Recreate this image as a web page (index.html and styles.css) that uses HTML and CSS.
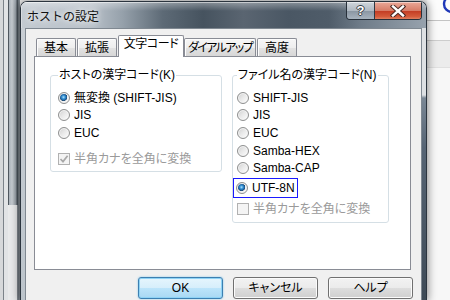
FILE: index.html
```html
<!DOCTYPE html>
<html lang="ja">
<head>
<meta charset="utf-8">
<title>ホストの設定</title>
<link rel="stylesheet" href="styles.css">
</head>
<body>
<div class="desk">
  <div class="bg-left">
    <div class="bgl-top"></div>
    <div class="bgl-bot"></div>
  </div>

  <div class="dialog">
    <div class="titlebar">
      <span class="title">ホストの設定</span>
      <div class="caption">
        <div class="cbtn help">?</div>
        <div class="cbtn close">
          <svg width="16" height="12" viewBox="0 0 16 12">
            <path d="M3 1.5 L13 10.5 M13 1.5 L3 10.5" stroke="#4a2a24" stroke-width="4.4" stroke-linecap="square" fill="none"/>
            <path d="M3 1.5 L13 10.5 M13 1.5 L3 10.5" stroke="#ffffff" stroke-width="2.4" stroke-linecap="square" fill="none"/>
          </svg>
        </div>
      </div>
    </div>

    <div class="frame">
      <div class="client">
        <div class="tabs">
          <div class="tab w40">基本</div>
          <div class="tab w40">拡張</div>
          <div class="tab active">文字コード</div>
          <div class="tab w72">ダイアルアップ</div>
          <div class="tab w40">高度</div>
        </div>

        <div class="panel">
          <fieldset class="group g-host">
            <legend>ホストの漢字コード(K)</legend>
            <div class="opt"><span class="radio on"></span>無変換 (SHIFT-JIS)</div>
            <div class="opt"><span class="radio"></span>JIS</div>
            <div class="opt"><span class="radio"></span>EUC</div>
            <div class="opt disabled cb-left"><span class="check">
              <svg width="10" height="10" viewBox="0 0 10 10"><path d="M1.5 5 L4 7.6 L8.6 1.8" stroke="#a9a9a9" stroke-width="1.7" fill="none"/></svg>
            </span>半角カナを全角に変換</div>
          </fieldset>

          <fieldset class="group g-file">
            <legend>ファイル名の漢字コード(N)</legend>
            <div class="opt"><span class="radio"></span>SHIFT-JIS</div>
            <div class="opt"><span class="radio"></span>JIS</div>
            <div class="opt"><span class="radio"></span>EUC</div>
            <div class="opt"><span class="radio"></span>Samba-HEX</div>
            <div class="opt"><span class="radio"></span>Samba-CAP</div>
            <div class="opt focus"><span class="radio on"></span>UTF-8N</div>
            <div class="opt disabled cb-right"><span class="check"></span>半角カナを全角に変換</div>
          </fieldset>
        </div>

        <div class="buttons">
          <div class="btn default">OK</div>
          <div class="btn">キャンセル</div>
          <div class="btn">ヘルプ</div>
        </div>
      </div>
    </div>
  </div>

  <div class="bg-right">
    <div class="br-top">
      <svg width="23" height="20" viewBox="0 0 23 20"><circle cx="25" cy="4" r="8" stroke="#2038b8" stroke-width="2.4" fill="none"/></svg>
    </div>
    <div class="br-mid"></div>
    <div class="br-box"></div>
    <div class="br-rest"></div>
  </div>
</div>
</body>
</html>
```

FILE: styles.css
```css
* { box-sizing: border-box; }

html, body { margin: 0; padding: 0; }

body {
  width: 450px;
  height: 300px;
  overflow: hidden;
  background: #f4f4f4;
  font-family: "Liberation Sans", "Noto Sans CJK JP", sans-serif;
  font-size: 12px;
  line-height: 14px;
  color: #000;
  font-feature-settings: "palt";
}

.desk {
  display: flex;
  height: 300px;
}

/* ---------- background windows ---------- */
.bg-left {
  width: 20px;
  flex: none;
  display: flex;
  flex-direction: column;
}
.bgl-top {
  height: 205px;
  background: linear-gradient(to right,
    #d6d8da 0 3px, #7b8289 3px 4px, #e1e3e5 4px 8px,
    #4f575f 8px 9px, #a9b1b9 9px, #c6cbd0 12px, #959da5 16px,
    #4b535b 17px 18px, #6a727a 18px, #8b9299 20px);
}
.bgl-bot {
  flex: 1;
  background: linear-gradient(to right,
    #d6d8da 0 3px, #7b8289 3px 4px, #e1e3e5 4px 8px,
    #e8e9ea 8px 17px, #80878e 17px 18px, #6a727a 18px, #8b9299 20px);
}

.bg-right {
  flex: 1;
  display: flex;
  flex-direction: column;
  background: #fafafa;
}
.br-top {
  height: 21px;
  background: #fcfcfc;
  border-bottom: 1px solid #c4c4c4;
}
.br-top svg { display: block; }
.br-mid { height: 19px; background: #f9f9f9; }
.br-box {
  height: 28px;
  background: #ececec;
  border-top: 1px solid #cdcdcd;
  border-bottom: 1px solid #e0e0e0;
}
.br-rest { flex: 1; background: #f7f7f7; }

/* ---------- dialog window ---------- */
.dialog {
  position: relative;
  z-index: 2;
  width: 407px;
  height: 299px;
  flex: none;
  margin-top: 1px;
  border: 1px solid #2c353f;
  border-bottom: none;
  border-radius: 7px 7px 0 0;
  display: flex;
  flex-direction: column;
  overflow: hidden;
  box-shadow: 0 0 9px 1px rgba(0, 0, 0, 0.45);
}

.titlebar {
  height: 26px;
  flex: none;
  display: flex;
  justify-content: space-between;
  padding-left: 6px;
  background:
    linear-gradient(to bottom, rgba(255,255,255,0.35) 0, rgba(255,255,255,0) 9px),
    linear-gradient(to right,
      #c3cad1 0, #bac2ca 17%, #96a1ab 25%, #5d6a76 35%, #46535f 45%,
      #5a6571 55%, #4a5764 66%, #4f5c69 76%, #6f7c89 84%, #97a2ad 100%);
  box-shadow: inset 0 1px 0 rgba(255,255,255,0.5), inset 1px 0 0 rgba(255,255,255,0.35);
}

.title {
  padding-top: 6px;
  font-family: "Noto Sans CJK JP", sans-serif;
  font-feature-settings: normal;
  font-size: 12px;
  line-height: 15px;
  color: #111;
  text-shadow: 0 0 5px rgba(255,255,255,0.95), 0 0 9px rgba(255,255,255,0.7);
}

.caption {
  display: flex;
  height: 18px;
  margin-right: 4px;
  border: 1px solid #27303a;
  border-top: none;
  border-radius: 0 0 4px 4px;
  overflow: hidden;
}
.cbtn {
  height: 17px;
  display: flex;
  align-items: center;
  justify-content: center;
}
.help {
  width: 28px;
  border-right: 1px solid #2f3944;
  background: linear-gradient(to bottom, #d0d6dc 0, #b0b9c2 50%, #8995a1 51%, #a8b3be 100%);
  box-shadow: inset 0 1px 0 rgba(255,255,255,0.5);
  font-family: "Liberation Sans", sans-serif;
  font-weight: bold;
  font-size: 13px;
  color: #fff;
  text-shadow: 1px 0 #3a3f45, -1px 0 #3a3f45, 0 1px #3a3f45, 0 -1px #3a3f45;
}
.close {
  width: 46px;
  background: linear-gradient(to bottom, #eaa898 0, #d77d68 50%, #c23a22 51%, #d45a3a 85%, #e08060 100%);
  box-shadow: inset 0 1px 0 rgba(255,255,255,0.45);
}
.close svg { display: block; }

.frame {
  flex: 1;
  display: flex;
  padding: 0 4px;
  background:
    linear-gradient(to bottom, #dde0e3 0 67px, #7a8795 70px, #566474 120px, #3e4a56 100%) right top / 4px 100% no-repeat,
    linear-gradient(to bottom, #c8ced4, #bcc4cb) left top / 4px 100% no-repeat;
}

.client {
  flex: 1;
  border: 1px solid #7f8891;
  border-bottom: none;
  background: #f0f0f0;
  padding: 6px 8px 0 8px;
  display: flex;
  flex-direction: column;
}

/* ---------- tabs ---------- */
.tabs {
  height: 21px;
  flex: none;
  display: flex;
  align-items: flex-end;
  padding-left: 2px;
}
.tab {
  height: 18px;
  margin-right: 1px;
  border: 1px solid #898c95;
  border-bottom: none;
  border-radius: 2px 2px 0 0;
  padding-top: 2px;
  text-align: center;
  white-space: nowrap;
  overflow: hidden;
  background: linear-gradient(to bottom, #f6f6f6 0, #eeeeee 50%, #e2e2e2 51%, #d7d7d7 100%);
  box-shadow: inset 1px 1px 0 #fdfdfd;
}
.w40 { width: 40px; }
.w72 { width: 72px; letter-spacing: -1.6px; }
.tab.active {
  position: relative;
  z-index: 1;
  width: 66px;
  height: 22px;
  margin-right: 0;
  margin-bottom: -1px;
  padding-top: 1px;
  letter-spacing: -0.4px;
  background: #fff;
  box-shadow: none;
}

/* ---------- panel ---------- */
.panel {
  height: 214px;
  flex: none;
  margin-right: 2px;
  border: 1px solid #898c95;
  background: #fff;
  display: flex;
  align-items: flex-start;
  gap: 10px;
  padding: 11px 0 0 15px;
}

.group {
  margin: 0;
  min-width: 0;
  border: 1px solid #d5dfe5;
  border-radius: 3px;
  padding: 7px 0 4px 7px;
}
.group legend {
  padding: 0 1px;
  line-height: 14px;
  white-space: nowrap;
}
.g-host { width: 172px; }
.g-file { width: 157px; padding-left: 4px; }

.opt {
  display: flex;
  align-items: center;
  height: 17.6px;
  white-space: nowrap;
}
.opt.disabled { color: #9a9a9a; }
.cb-left { margin-top: 8px; }
.cb-right { margin-top: 2.5px; }

.opt.focus {
  width: fit-content;
  height: 20px;
  margin-top: 1px;
  margin-left: -4px;
  padding: 0 2px 0 2px;
  border: 1px solid #1a1aff;
}

.radio {
  width: 12px;
  height: 12px;
  flex: none;
  margin-right: 4px;
  border-radius: 50%;
  border: 1px solid #8e8f8f;
  background: linear-gradient(135deg, #cfcfcf 0, #e8e8e8 45%, #ffffff 100%);
  box-shadow: inset 0 0 0 1px #f4f4f4;
}
.radio.on {
  background:
    radial-gradient(circle at 45% 42%, #b6e2fa 0, #3a97d8 1.6px, #1c5f9c 3px, #22486c 3.6px, rgba(0,0,0,0) 4px),
    linear-gradient(135deg, #cfcfcf 0, #e8e8e8 45%, #ffffff 100%);
}

.check {
  width: 12px;
  height: 12px;
  flex: none;
  margin-right: 4px;
  border: 1px solid #b1b1b1;
  background: #f4f4f4;
  display: flex;
  align-items: center;
  justify-content: center;
}
.check svg { display: block; }

/* ---------- buttons ---------- */
.buttons {
  display: flex;
  justify-content: flex-end;
  gap: 10px;
  margin-top: 7px;
}
.btn {
  width: 85px;
  height: 22px;
  flex: none;
  border: 1px solid #707070;
  border-radius: 3px;
  display: flex;
  align-items: center;
  justify-content: center;
  background: linear-gradient(to bottom, #f2f2f2 0, #ebebeb 50%, #dddddd 51%, #cfcfcf 100%);
  box-shadow: inset 0 0 0 1px #fbfbfb;
}
.btn.default {
  border-color: #3c7fb1;
  background: linear-gradient(to bottom, #e6f5fd 0, #d6eefb 50%, #bce4fa 51%, #a9d8f3 100%);
  box-shadow: inset 0 0 0 1px #8fd3f5, 0 0 2px #7cc4ec;
}
```
